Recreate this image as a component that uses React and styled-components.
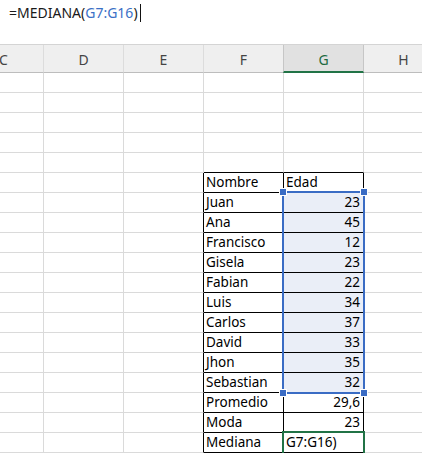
import styled, { createGlobalStyle } from "styled-components";

const GlobalStyle = createGlobalStyle`
  html, body {
    margin: 0;
    padding: 0;
    background: #ffffff;
  }
  body {
    font-family: "Noto Sans", "Liberation Sans", Arial, sans-serif;
    overflow: hidden;
  }
`;

const Page = styled.div`
  width: 422px;
  height: 453px;
  overflow: hidden;
  background: #fff;
`;

const FormulaBar = styled.div`
  box-sizing: border-box;
  height: 45px;
  border-bottom: 1px solid #d4d4d4;
  padding: 3px 0 0 9px;
  display: flex;
  align-items: flex-start;
  font-size: 14px;
  line-height: 20px;
  color: #1a1a1a;
`;

const Ref = styled.span`
  color: #3a70c6;
`;

const Caret = styled.span`
  display: inline-block;
  width: 1px;
  height: 18px;
  margin: 1px 0 0 2px;
  background: #111;
`;

const Sheet = styled.div`
  position: relative;
  overflow: hidden;
  height: 408px;
`;

const Grid = styled.div`
  display: grid;
  grid-template-columns: repeat(6, 80px);
  grid-template-rows: 28px;
  grid-auto-rows: 20px;
  margin-left: -36px;
  width: 480px;
`;

const Head = styled.div`
  box-sizing: border-box;
  background: ${(p) => (p.$active ? "#e1e1e1" : "#efefef")};
  border-right: 1px solid ${(p) => (p.$active ? "#c6c6c6" : "#dcdcdc")};
  border-left: ${(p) => (p.$active ? "1px solid #c6c6c6" : "none")};
  margin-left: ${(p) => (p.$active ? "-1px" : "0")};
  border-bottom: ${(p) => (p.$active ? "2px solid #217346" : "1px solid #bdbdbd")};
  display: flex;
  align-items: center;
  justify-content: center;
  padding-top: ${(p) => (p.$active ? "3px" : "2px")};
  font-size: 14px;
  color: ${(p) => (p.$active ? "#1d6b42" : "#444")};
`;

const Cell = styled.div`
  box-sizing: border-box;
  border-right: 1px solid ${(p) => (p.$darkRight ? "#000" : "#dadada")};
  border-bottom: 1px solid ${(p) => (p.$darkBottom ? "#000" : "#dadada")};
  background: ${(p) => (p.$sel ? "#eaeef7" : "#fff")};
  display: flex;
  align-items: flex-end;
  justify-content: ${(p) => (p.$num ? "flex-end" : "flex-start")};
  padding: 0 3px 0 2px;
  font-size: 13.5px;
  line-height: 19px;
  color: #000;
  white-space: nowrap;
  overflow: visible;
`;

const Selection = styled.div`
  position: absolute;
  left: 282px;
  top: 146px;
  width: 83px;
  height: 203px;
  box-sizing: border-box;
  border: 2px solid #3a6cc4;
  pointer-events: none;
`;

const Handle = styled.div`
  position: absolute;
  width: 6px;
  height: 6px;
  background: #3a6cc4;
  box-shadow: 0 0 0 1px #fff;
  ${(p) => (p.$top ? "top: -4px;" : "bottom: -4px;")}
  ${(p) => (p.$left ? "left: -4px;" : "right: -4px;")}
`;

const ActiveCell = styled.div`
  position: absolute;
  left: 282px;
  top: 386px;
  width: 83px;
  height: 24px;
  box-sizing: border-box;
  border: 2px solid #217346;
  pointer-events: none;
`;

const columns = ["C", "D", "E", "F", "G", "H"];

const table = [
  ["Nombre", "Edad"],
  ["Juan", "23"],
  ["Ana", "45"],
  ["Francisco", "12"],
  ["Gisela", "23"],
  ["Fabian", "22"],
  ["Luis", "34"],
  ["Carlos", "37"],
  ["David", "33"],
  ["Jhon", "35"],
  ["Sebastian", "32"],
  ["Promedio", "29,6"],
  ["Moda", "23"],
  ["Mediana", "G7:G16)"],
];

const FIRST = 6; // row of the table header

function App() {
  const rows = [];
  for (let r = 1; r <= 19; r++) {
    columns.forEach((col, c) => {
      const inTable = r >= FIRST && (c === 3 || c === 4);
      const t = r - FIRST;
      let text = "";
      if (inTable) text = table[t][c - 3];
      const num = c === 4 && r > FIRST && r < 19;
      rows.push(
        <Cell
          key={`${col}${r}`}
          $darkRight={r >= FIRST && (c === 2 || c === 3 || c === 4)}
          $darkBottom={(r >= FIRST - 1) && (c === 3 || c === 4)}
          $sel={c === 4 && r >= 7 && r <= 16}
          $num={num}
        >
          {text}
        </Cell>
      );
    });
  }

  return (
    <Page>
      <GlobalStyle />
      <FormulaBar>
        <span>
          =MEDIANA(<Ref>G7:G16</Ref>)
        </span>
        <Caret />
      </FormulaBar>
      <Sheet>
        <Grid>
          {columns.map((col) => (
            <Head key={col} $active={col === "G"}>
              {col}
            </Head>
          ))}
          {rows}
        </Grid>
        <Selection>
          <Handle $top $left />
          <Handle $top />
          <Handle $left />
          <Handle />
        </Selection>
        <ActiveCell />
      </Sheet>
    </Page>
  );
}

export default App;
